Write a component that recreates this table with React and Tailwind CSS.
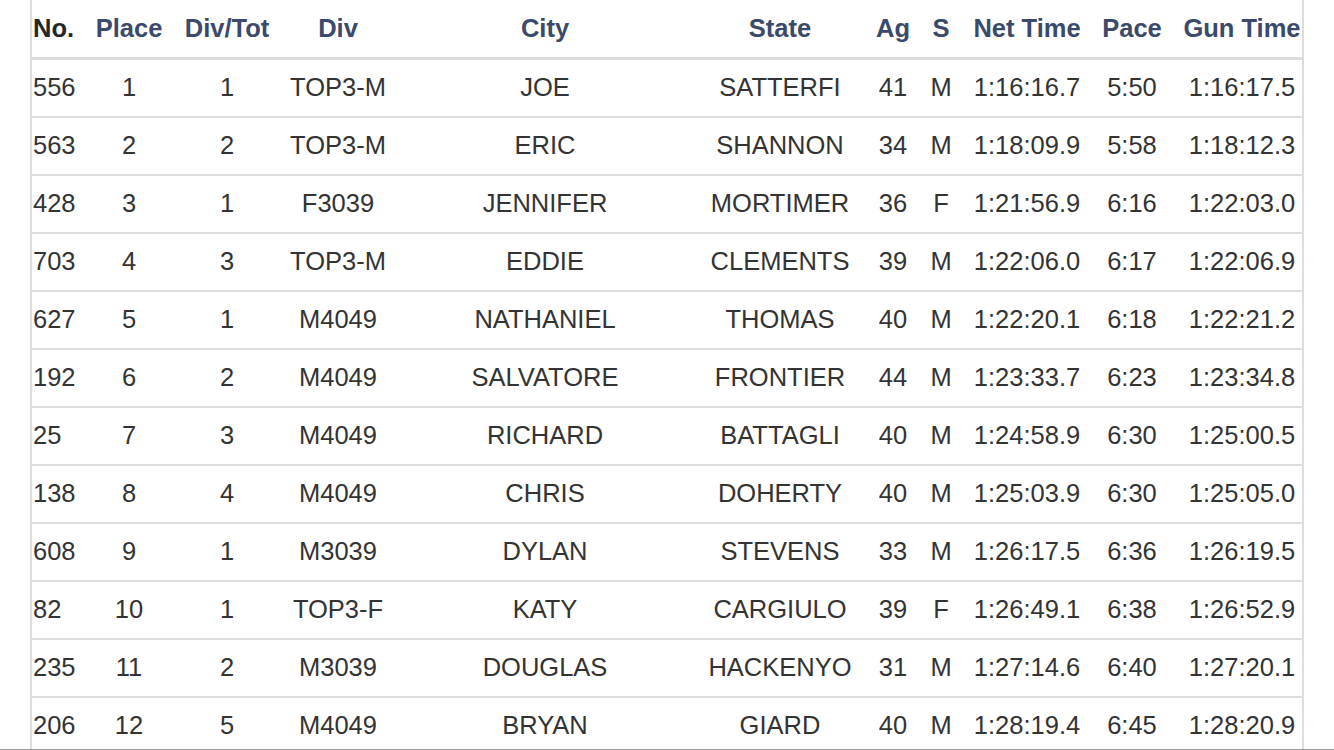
import React from "react";

const rows = [
  ["556", "1", "1", "TOP3-M", "JOE", "SATTERFI", "41", "M", "1:16:16.7", "5:50", "1:16:17.5"],
  ["563", "2", "2", "TOP3-M", "ERIC", "SHANNON", "34", "M", "1:18:09.9", "5:58", "1:18:12.3"],
  ["428", "3", "1", "F3039", "JENNIFER", "MORTIMER", "36", "F", "1:21:56.9", "6:16", "1:22:03.0"],
  ["703", "4", "3", "TOP3-M", "EDDIE", "CLEMENTS", "39", "M", "1:22:06.0", "6:17", "1:22:06.9"],
  ["627", "5", "1", "M4049", "NATHANIEL", "THOMAS", "40", "M", "1:22:20.1", "6:18", "1:22:21.2"],
  ["192", "6", "2", "M4049", "SALVATORE", "FRONTIER", "44", "M", "1:23:33.7", "6:23", "1:23:34.8"],
  ["25", "7", "3", "M4049", "RICHARD", "BATTAGLI", "40", "M", "1:24:58.9", "6:30", "1:25:00.5"],
  ["138", "8", "4", "M4049", "CHRIS", "DOHERTY", "40", "M", "1:25:03.9", "6:30", "1:25:05.0"],
  ["608", "9", "1", "M3039", "DYLAN", "STEVENS", "33", "M", "1:26:17.5", "6:36", "1:26:19.5"],
  ["82", "10", "1", "TOP3-F", "KATY", "CARGIULO", "39", "F", "1:26:49.1", "6:38", "1:26:52.9"],
  ["235", "11", "2", "M3039", "DOUGLAS", "HACKENYO", "31", "M", "1:27:14.6", "6:40", "1:27:20.1"],
  ["206", "12", "5", "M4049", "BRYAN", "GIARD", "40", "M", "1:28:19.4", "6:45", "1:28:20.9"],
];

const headers = ["No.", "Place", "Div/Tot", "Div", "City", "State", "Ag", "S", "Net Time", "Pace", "Gun Time"];

const grid =
  "grid grid-cols-[55px_84px_112px_110px_304px_166px_60px_36px_136px_74px_133px]";

function cellClass(i) {
  if (i === 0) return "pl-[1px] text-left whitespace-nowrap";
  if (i === 10) return "pl-[13px] text-center whitespace-nowrap";
  return "text-center whitespace-nowrap";
}

export default function App() {
  return (
    <div className="w-[1334px] h-[750px] flex flex-col overflow-hidden bg-white font-['Liberation_Sans',Arial,Helvetica,sans-serif] text-[25.5px] leading-none">
      <div className="flex-1 overflow-hidden">
        <div className="ml-[30px] w-[1274px] border-l-2 border-r-2 border-[#dddddd]">
          <div className={`${grid} h-[60px] items-center border-b-[3px] border-[#dddddd] font-bold`}>
            {headers.map((h, i) => (
              <div
                key={h}
                className={`${cellClass(i)} ${i === 0 ? "text-[#262626]" : "text-[#3b4a6b]"}`}
              >
                {h}
              </div>
            ))}
          </div>
          {rows.map((r, ri) => (
            <div
              key={ri}
              className={`${grid} h-[58px] items-center border-b-2 border-[#dddddd] text-[#333333]`}
            >
              {r.map((c, i) => (
                <div key={i} className={cellClass(i)}>
                  {c}
                </div>
              ))}
            </div>
          ))}
        </div>
      </div>
      <div className="h-px bg-[#9a9a9a]" />
    </div>
  );
}
